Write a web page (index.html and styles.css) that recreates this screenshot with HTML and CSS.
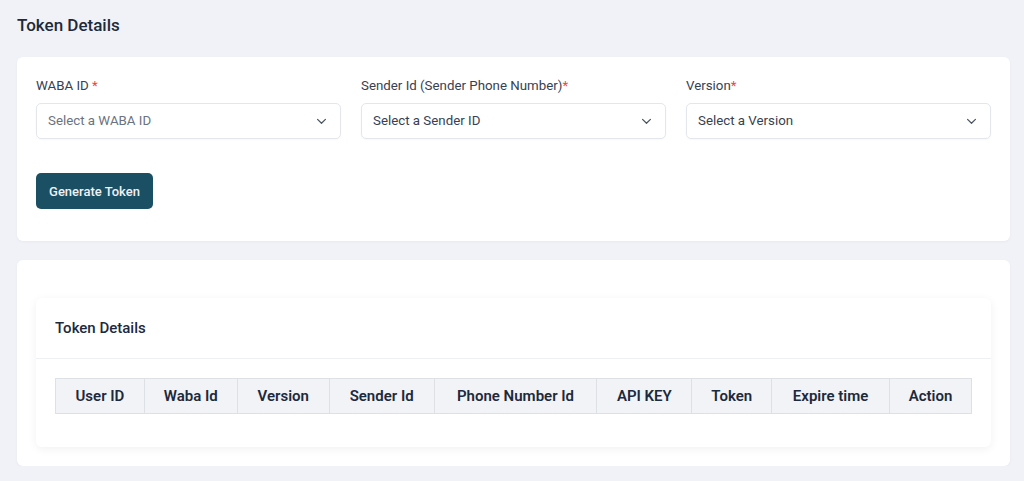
FILE: index.html
```html
<!DOCTYPE html>
<html>

<head>
  <meta charset="utf-8">
  <meta name="viewport" content="width=device-width">
  <title>Token Details</title>
  <link rel="stylesheet" href="styles.css">
</head>

<body>
<main>
  <h1 class="page-title">Token Details</h1>

  <section class="card form-card">
    <div class="fields">
      <div class="field">
        <label>WABA ID <span class="req">*</span></label>
        <div class="select placeholder">
          <span>Select a WABA ID</span>
          <svg class="chev" viewBox="0 0 12 8" width="11" height="7"><path d="M1.5 1.5l4.5 4.5 4.5-4.5" fill="none" stroke="#4b5563" stroke-width="1.4" stroke-linecap="round" stroke-linejoin="round"/></svg>
        </div>
      </div>
      <div class="field">
        <label>Sender Id (Sender Phone Number)<span class="req">*</span></label>
        <div class="select">
          <span>Select a Sender ID</span>
          <svg class="chev" viewBox="0 0 12 8" width="11" height="7"><path d="M1.5 1.5l4.5 4.5 4.5-4.5" fill="none" stroke="#4b5563" stroke-width="1.4" stroke-linecap="round" stroke-linejoin="round"/></svg>
        </div>
      </div>
      <div class="field">
        <label>Version<span class="req">*</span></label>
        <div class="select">
          <span>Select a Version</span>
          <svg class="chev" viewBox="0 0 12 8" width="11" height="7"><path d="M1.5 1.5l4.5 4.5 4.5-4.5" fill="none" stroke="#4b5563" stroke-width="1.4" stroke-linecap="round" stroke-linejoin="round"/></svg>
        </div>
      </div>
    </div>
    <button class="btn-primary">Generate Token</button>
  </section>

  <section class="card list-card">
    <div class="inner-card">
      <div class="inner-head">Token Details</div>
      <div class="inner-body">
        <table class="tokens">
          <thead>
            <tr>
              <th class="c-user">User ID</th>
              <th class="c-waba">Waba Id</th>
              <th class="c-ver">Version</th>
              <th class="c-sender">Sender Id</th>
              <th class="c-phone">Phone Number Id</th>
              <th class="c-api">API KEY</th>
              <th class="c-token">Token</th>
              <th class="c-exp">Expire time</th>
              <th class="c-act">Action</th>
            </tr>
          </thead>
          <tbody></tbody>
        </table>
      </div>
    </div>
  </section>
</main>
</body>

</html>
```

FILE: styles.css
```css
* {
  box-sizing: border-box;
}

body {
  margin: 0;
  background-color: #f0f2f7;
  font-family: Roboto, "Liberation Sans", sans-serif;
  color: #1f2937;
}

main {
  padding: 14px 14px 0 17px;
  display: flex;
  flex-direction: column;
}

.page-title {
  margin: 0 0 21px 0;
  font-size: 17px;
  font-weight: 500;
  line-height: 22px;
  color: #1e293b;
}

.card {
  background-color: white;
  border-radius: 6px;
  box-shadow: 0 1px 3px rgba(15, 23, 42, 0.04);
}

.form-card {
  padding: 19px 19px 32px 19px;
  margin-bottom: 19px;
}

.fields {
  display: flex;
  gap: 20px;
}

.field {
  flex: 1;
  display: flex;
  flex-direction: column;
}

.field label {
  font-size: 13.3px;
  line-height: 18px;
  color: #374151;
  margin-top: 1px;
  margin-bottom: 8px;
}

.req {
  color: #ef4444;
}

.select {
  height: 36px;
  border: 1px solid #e3e6eb;
  border-radius: 5px;
  display: flex;
  align-items: center;
  justify-content: space-between;
  padding: 0 13px 1px 11px;
  font-size: 13.3px;
  color: #374151;
  box-shadow: 0 1px 2px rgba(0, 0, 0, 0.03);
}

.select.placeholder {
  color: #6b7280;
}

.chev {
  margin-top: 1px;
}

.btn-primary {
  margin-top: 34px;
  align-self: flex-start;
  width: 117px;
  height: 36px;
  background-color: #1a4f64;
  color: #eef2f5;
  border: none;
  border-radius: 5px;
  font-family: Roboto, "Liberation Sans", sans-serif;
  font-size: 13px;
  font-weight: 500;
}

.list-card {
  padding: 38px 19px 19px 19px;
}

.inner-card {
  background-color: white;
  border-radius: 6px;
  box-shadow: 0 2px 10px rgba(15, 23, 42, 0.06);
}

.inner-head {
  padding: 20px 19px;
  font-size: 15px;
  font-weight: 500;
  line-height: 20px;
  color: #1e293b;
  border-bottom: 1px solid #eef0f3;
}

.inner-body {
  padding: 19px 19px 33px 19px;
}

.tokens {
  border-collapse: collapse;
  width: 100%;
}

.tokens th {
  background-color: #f1f3f6;
  border: 1px solid #dde0e4;
  height: 35px;
  padding: 0;
  font-size: 15px;
  font-weight: 600;
  color: #1e293b;
  text-align: center;
}

.c-user { width: 89px; }
.c-waba { width: 93px; }
.c-ver { width: 92px; }
.c-sender { width: 105px; }
.c-phone { width: 163px; }
.c-api { width: 95px; }
.c-token { width: 80px; }
.c-exp { width: 118px; }
.c-act { width: 82px; }
```
